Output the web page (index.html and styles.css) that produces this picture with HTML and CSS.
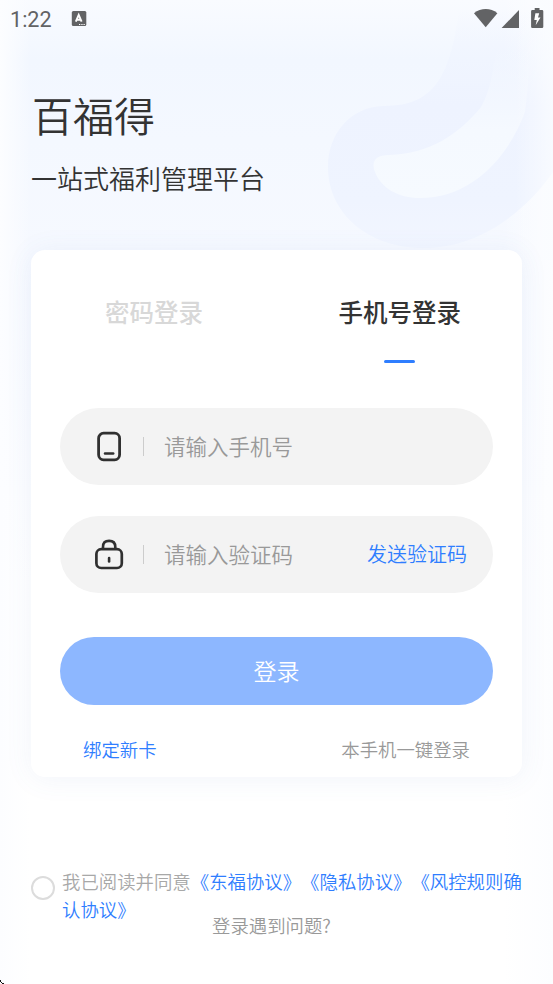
FILE: index.html
```html
<!DOCTYPE html>
<html lang="zh-CN">

<head>
  <meta charset="UTF-8">
  <meta name="viewport" content="width=device-width, initial-scale=1.0">
  <title>百福得</title>
  <link rel="stylesheet" href="styles.css">
</head>

<body>
  <!-- 背景图形 -->
  <svg class="bg_shape" width="553" height="260" viewBox="0 0 553 260">
    <defs>
      <linearGradient id="band" x1="0" y1="0" x2="0" y2="1">
        <stop offset="0" stop-color="#eef3ff" stop-opacity="0" />
        <stop offset="0.4" stop-color="#eef3ff" />
        <stop offset="0.8" stop-color="#eff4ff" />
        <stop offset="1" stop-color="#f2f6ff" />
      </linearGradient>
      <linearGradient id="inner" x1="0" y1="0" x2="0" y2="1">
        <stop offset="0.1" stop-color="#f5f9ff" stop-opacity="0" />
        <stop offset="0.6" stop-color="#f5f9ff" />
        <stop offset="1" stop-color="#f6faff" />
      </linearGradient>
      <linearGradient id="edge" x1="0" y1="0" x2="1" y2="0">
        <stop offset="0" stop-color="#fafcff" stop-opacity="0" />
        <stop offset="1" stop-color="#fafcff" stop-opacity="0.8" />
      </linearGradient>
    </defs>
    <path fill="url(#band)" d="M459 10C453 58 442 80 430 91C417 103 401 106 383 106C351 107 328 133 328 167C328 214 369 248 423 248C480 248 526 211 553 172V10Z" />
    <path fill="url(#inner)" d="M498 30C495 64 491 90 481 107C458 135 429 154 389 155C375 155 371 162 375 172C381 188 398 198 420 198C471 198 508 158 525 112C528 90 530 60 530 30Z" />
    <rect x="515" width="38" height="260" fill="url(#edge)" />
  </svg>

  <!-- 状态栏 -->
  <div class="status_bar">
    <span class="time">1:22</span>
    <svg class="ime" width="16" height="16" viewBox="0 0 16 16">
      <rect x="0.8" y="0" width="14.5" height="15" rx="1.5" fill="#626365" />
      <path d="M4.8 10.6L7.7 3.8L10.6 10.6M5.8 8.7H9.6" fill="none" stroke="#fff" stroke-width="1.9" />
      <path d="M8 13.5H9.3M10.3 13.5H11.6M12.5 13.5H13.8" stroke="#fff" stroke-width="1" />
    </svg>
    <svg class="signal" width="72" height="22" viewBox="0 0 72 22">
      <path d="M0 5.2C7-.3 16.5-.3 23.4 5.2L11.7 19.2Z" fill="#626365" />
      <path d="M27.6 20H45V2Z" fill="#626365" />
      <path d="M60.7 0H65.5V2H68Q69.3 2 69.3 3.3V18.7Q69.3 20 68 20H58.4Q57.1 20 57.1 18.7V3.3Q57.1 2 58.4 2H60.7Z" fill="#626365" />
      <path d="M61.4 5.3H65.2L64 9.5H66.5L61.7 17.2L62.8 12H60.3Z" fill="#fff" />
    </svg>
  </div>

  <div class="header">
    <h1>百福得</h1>
    <p>一站式福利管理平台</p>
  </div>

  <!-- 登录卡片 -->
  <div class="card">
    <div class="tabs">
      <div class="tab">密码登录</div>
      <div class="tab active">手机号登录</div>
    </div>

    <div class="field">
      <svg class="icon" width="30" height="32" viewBox="0 0 30 32">
        <rect x="3.6" y="2.2" width="21" height="26.6" rx="5" fill="none" stroke="#303030" stroke-width="2.8" />
        <path d="M10 22.6H18.2" stroke="#303030" stroke-width="2.5" stroke-linecap="round" />
      </svg>
      <span class="line"></span>
      <span class="placeholder">请输入手机号</span>
    </div>

    <div class="field code">
      <svg class="icon" width="30" height="32" viewBox="0 0 30 32">
        <rect x="1.4" y="10.2" width="25.4" height="18.8" rx="4.8" fill="none" stroke="#303030" stroke-width="2.7" />
        <path d="M8 10V8Q8 1.9 14.1 1.9Q20.3 1.9 20.3 8V10" fill="none" stroke="#303030" stroke-width="2.6" />
        <path d="M14.1 19V22.4" stroke="#303030" stroke-width="2.6" stroke-linecap="round" />
      </svg>
      <span class="line"></span>
      <span class="placeholder">请输入验证码</span>
      <span class="send">发送验证码</span>
    </div>

    <div class="login_btn">登录</div>

    <div class="links">
      <span class="bind">绑定新卡</span>
      <span class="quick">本手机一键登录</span>
    </div>
  </div>

  <!-- 协议 -->
  <div class="agreement">
    <span class="radio"></span>
    <p>我已阅读并同意<span>《东福协议》《隐私协议》《风控规则确认协议》</span></p>
  </div>
  <div class="help">登录遇到问题?</div>

  <svg class="corner" width="4" height="4" viewBox="0 0 4 4">
    <path d="M0 0H1V1H0ZM0 1H1V2H0ZM1 2H2V3H1ZM2 3H4V4H2Z" fill="#111" />
  </svg>
</body>

</html>
```
FILE: styles.css
```css
* {
  margin: 0;
  padding: 0;
  box-sizing: border-box;
}

body {
  position: relative;
  width: 553px;
  height: 984px;
  overflow: hidden;
  font-family: 'Noto Sans CJK SC', sans-serif;
  font-weight: 350;
  color: #333;
  white-space: nowrap;
  text-spacing-trim: space-all;
  background:
    linear-gradient(to right, #fcfdff 0, rgba(252, 253, 255, 0) 30px, rgba(252, 253, 255, 0) 503px, #fcfdff 553px),
    linear-gradient(to bottom, #f9fbff 0, #f2f7ff 60px, #f4f8ff 140px, #f6f9ff 250px, #f9fbff 400px, #fff 580px);
}

.bg_shape {
  position: absolute;
  left: 0;
  top: 0;
  z-index: -1;
}

/* 状态栏 */
.status_bar {
  display: flex;
  align-items: center;
  height: 38px;
  padding: 0 7px 0 10px;
  font-family: Roboto, sans-serif;
  font-weight: 400;
  color: #626365;
}

.time {
  width: 61px;
  padding-top: 1px;
  font-size: 21.6px;
  line-height: 38px;
}

.signal {
  margin-left: auto;
}

/* 标题 */
.header {
  height: 212px;
  padding: 46px 0 0 32px;
}

.header h1 {
  font-size: 41px;
  font-weight: 350;
  line-height: 60px;
}

.header p {
  margin: 14px 0 0 -1px;
  font-size: 26px;
  line-height: 40px;
}

/* 登录卡片 */
.card {
  width: 491px;
  height: 527px;
  margin-left: 31px;
  padding: 0 29px;
  border-radius: 14px;
  background: #fff;
  box-shadow: 0 2px 28px rgba(75, 115, 195, 0.08);
}

.tabs {
  display: flex;
  justify-content: space-between;
  height: 158px;
  padding: 42px 32px 0 45px;
  font-size: 24.5px;
  font-weight: 500;
  line-height: 40px;
}

.tab {
  color: #d8d8d8;
}

.active {
  color: #333;
}

.active::after {
  content: '';
  display: block;
  width: 31px;
  height: 3px;
  margin: 28px auto 0;
  border-radius: 2px;
  background: #2f7eff;
}

.field {
  display: flex;
  align-items: center;
  height: 77px;
  padding: 0 26px 0 35px;
  border-radius: 39px;
  background: #f3f3f3;
}

.code {
  margin-top: 31px;
}

.line {
  width: 1px;
  height: 19px;
  margin: 0 20px 0 18px;
  background: #ccc;
}

.placeholder {
  padding-bottom: 2px;
  font-size: 21.5px;
  color: #999;
}

.send {
  margin-left: auto;
  padding-bottom: 2px;
  font-size: 20px;
  color: #2f7eff;
}

.login_btn {
  height: 68px;
  margin-top: 44px;
  border-radius: 34px;
  background: #8db7ff;
  font-size: 23px;
  line-height: 66px;
  text-align: center;
  color: #fff;
}

.links {
  display: flex;
  justify-content: space-between;
  padding: 29px 23px 0;
  font-size: 18.4px;
  line-height: 30px;
}

.bind {
  color: #2f7eff;
}

.quick {
  color: #999;
}

/* 协议 */
.agreement {
  display: flex;
  height: 56px;
  margin: 91px 30px 0;
}

.radio {
  flex-shrink: 0;
  width: 24px;
  height: 24px;
  margin: 8px 7px 0 1px;
  border: 2px solid #dcdcdc;
  border-radius: 50%;
}

.agreement p {
  width: 462px;
  font-size: 18.4px;
  line-height: 27.6px;
  white-space: normal;
  color: #a8a8a8;
}

.agreement p span {
  color: #2f7eff;
}

.help {
  margin: -13px 0 0 212px;
  font-size: 18.4px;
  line-height: 28px;
  color: #999;
}

.corner {
  position: absolute;
  left: 0;
  bottom: 0;
}
```
